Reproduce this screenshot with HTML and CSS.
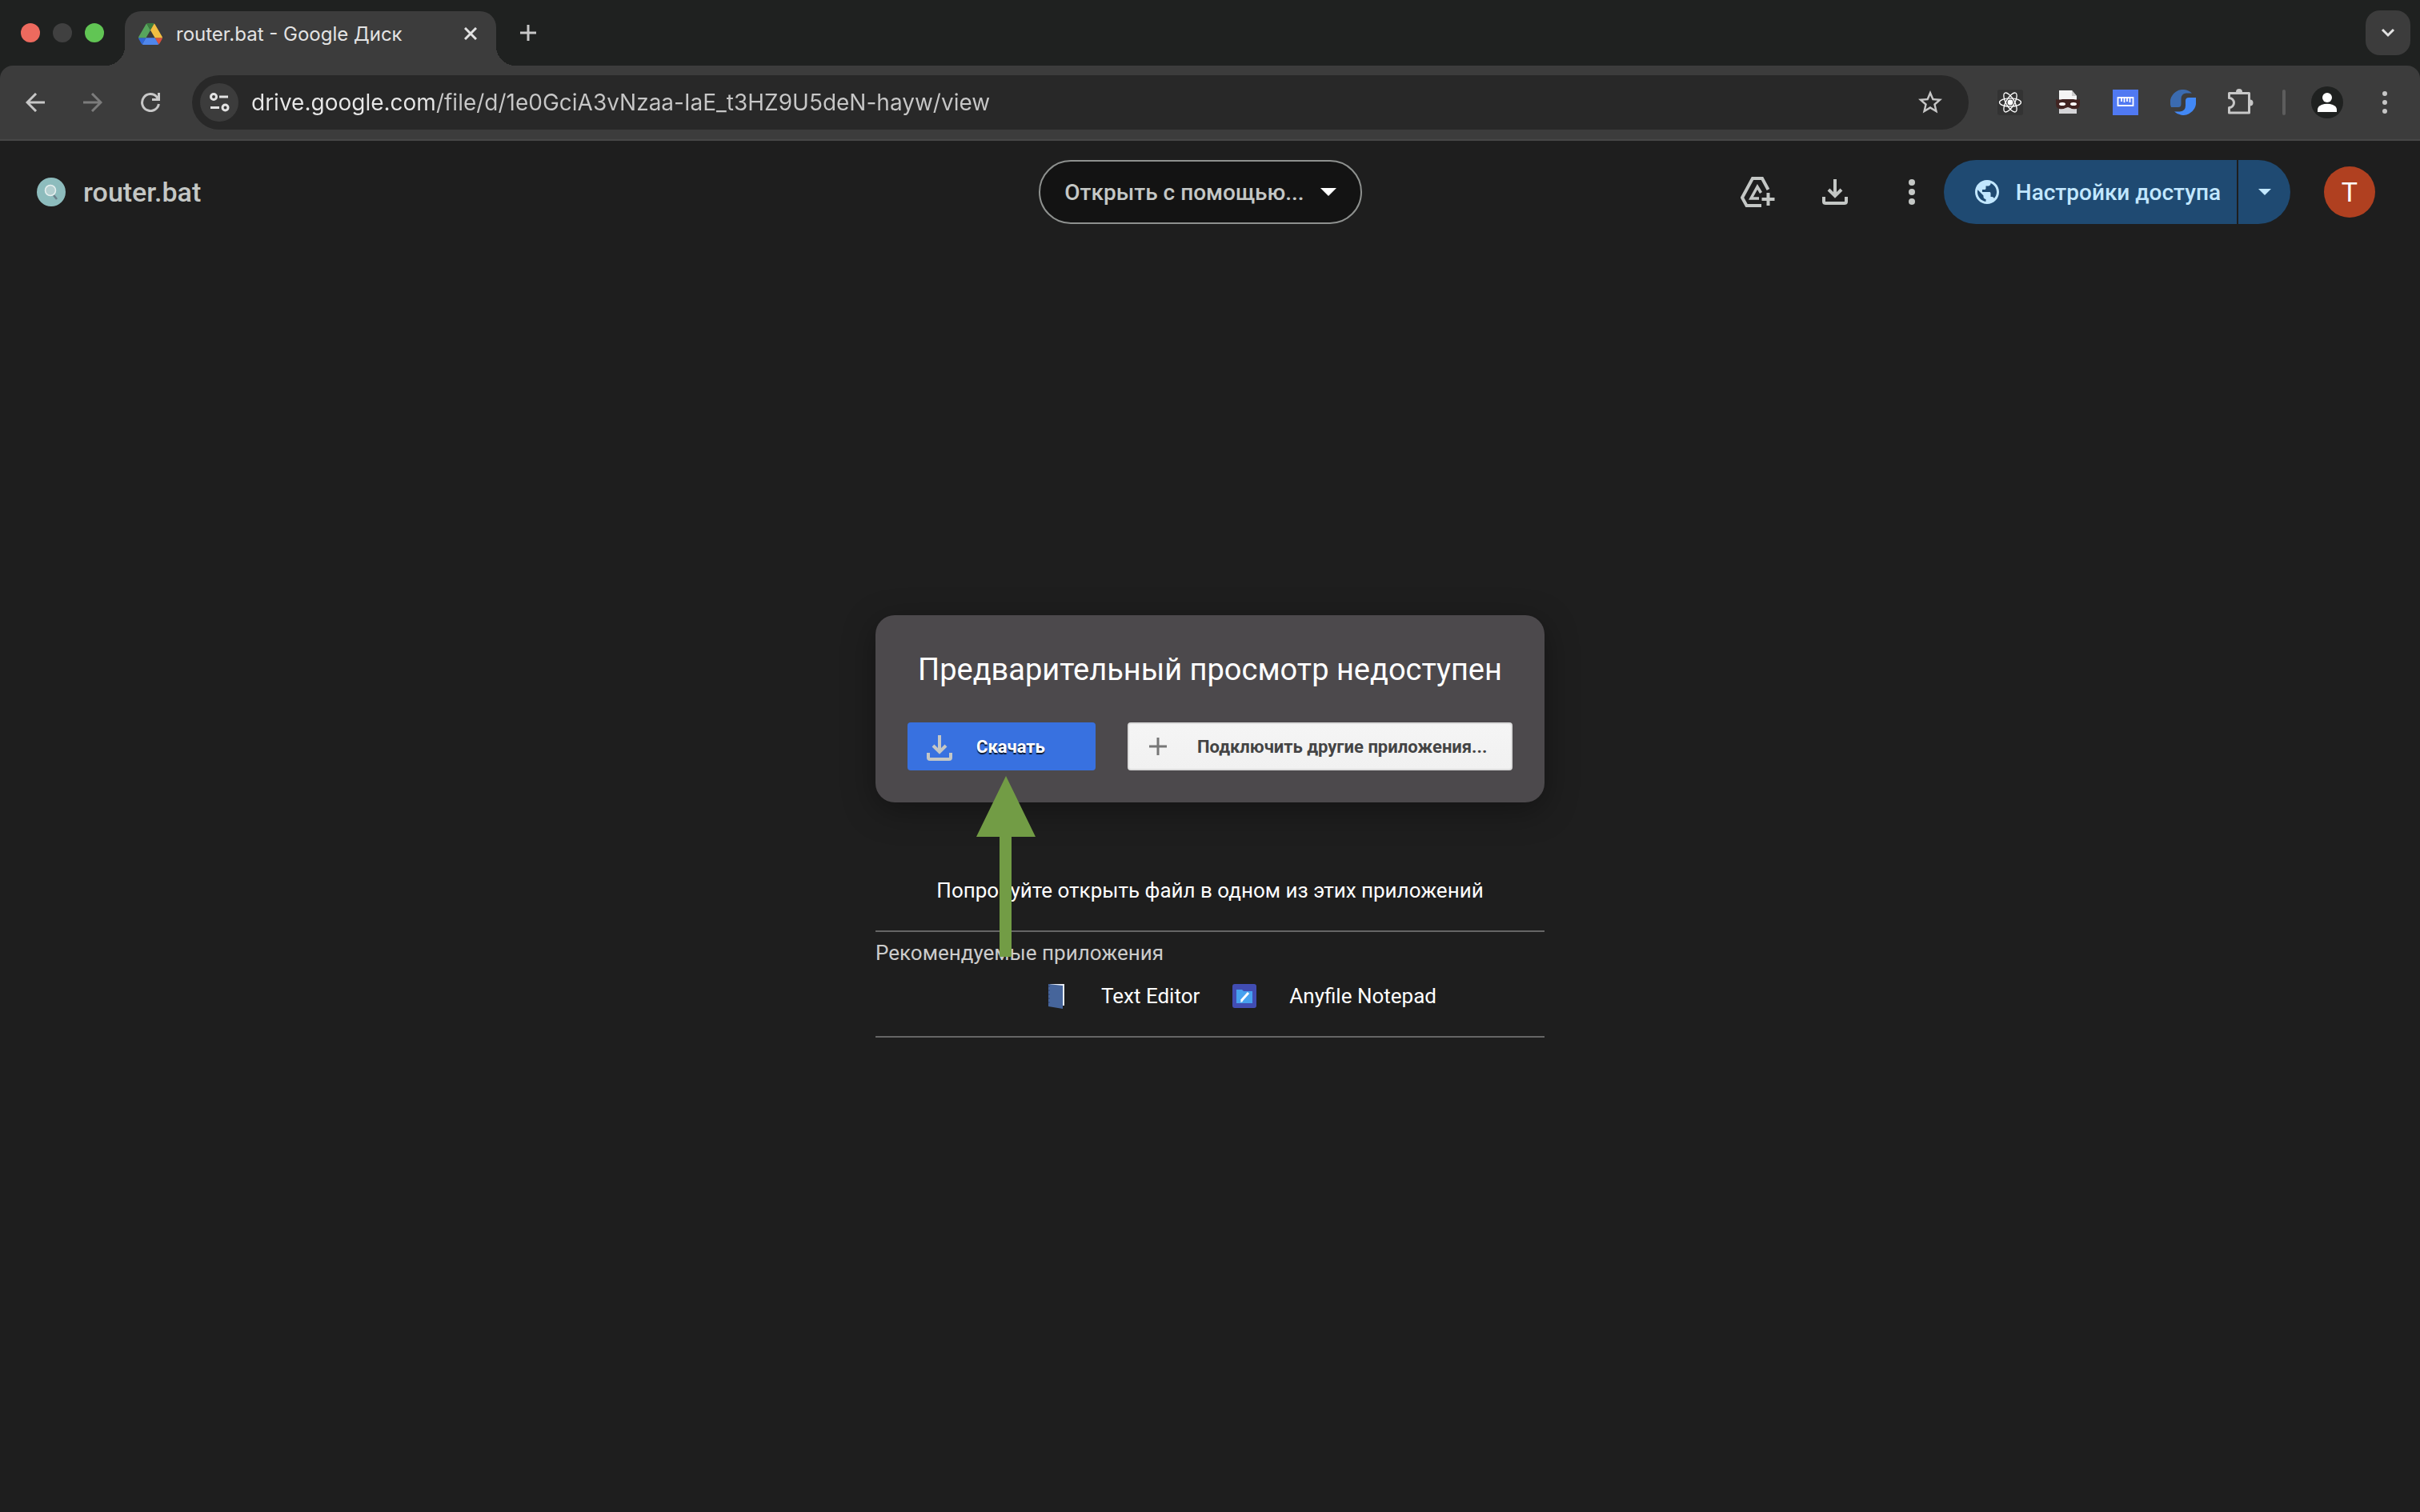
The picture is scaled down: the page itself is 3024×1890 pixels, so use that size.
FILE: index.html
```html
<!DOCTYPE html>
<html lang="ru">
<head>
    <meta charset="UTF-8">
    <title>router.bat - Google Диск</title>
    <link rel="stylesheet" href="styles.css">
</head>
<body>
<!-- browser window -->
<div class="browser">
    <div class="tabs">
        <div class="lights">
            <button class="light red" aria-label="Закрыть окно"></button>
            <button class="light" aria-label="Свернуть окно"></button>
            <button class="light green" aria-label="Развернуть окно"></button>
        </div>
        <div class="tab">
            <svg width="30" height="27" viewBox="0 0 87.3 78">
                <path fill="#3067d6" d="m6.6 66.85 3.85 6.65c.8 1.4 1.95 2.5 3.3 3.3l13.75-23.8h-27.5c0 1.55.4 3.1 1.2 4.5z"/>
                <path fill="#57a65c" d="m43.65 25-13.75-23.8c-1.35.8-2.5 1.9-3.3 3.3l-25.4 44a9.06 9.06 0 0 0-1.2 4.5h27.5z"/>
                <path fill="#d9503f" d="m73.55 76.8c1.35-.8 2.5-1.9 3.3-3.3l1.6-2.75 7.65-13.25c.8-1.4 1.2-2.95 1.2-4.5h-27.5l5.85 11.5z"/>
                <path fill="#3b7d3f" d="m43.65 25 13.75-23.8c-1.35-.8-2.9-1.2-4.5-1.2h-18.5c-1.6 0-3.15.45-4.5 1.2z"/>
                <path fill="#4f86ec" d="m59.8 53h-32.3l-13.75 23.8c1.35.8 2.9 1.2 4.5 1.2h50.8c1.6 0 3.15-.45 4.5-1.2z"/>
                <path fill="#f2be42" d="m73.4 26.5-12.7-22c-.8-1.4-1.95-2.5-3.3-3.3l-13.75 23.8 16.15 28h27.45c0-1.55-.4-3.1-1.2-4.5z"/>
            </svg>
            <span class="tab-title">router.bat - Google Диск</span>
            <button class="tab-close" aria-label="Закрыть вкладку">
                <svg width="16" height="16" viewBox="0 0 16 16" stroke="#e3e3e3" stroke-width="3"><path d="M1 1l14 14M15 1L1 15"/></svg>
            </button>
        </div>
        <button class="tab-new" aria-label="Новая вкладка">
            <svg width="20" height="20" viewBox="0 0 20 20" stroke="#c7c7c7" stroke-width="3"><path d="M10 0v20M0 10h20"/></svg>
        </button>
        <button class="tab-search" aria-label="Поиск вкладок">
            <svg width="18" height="12" viewBox="0 0 18 12" fill="none" stroke="#e3e3e3" stroke-width="3"><path d="M2 2l7 7 7-7"/></svg>
        </button>
    </div>

    <div class="toolbar">
        <button class="nav-btn" aria-label="Назад">
            <svg width="24" height="24" viewBox="0 0 24 24" fill="none" stroke="#c7c7c7" stroke-width="3"><path d="M24 12H3M13 1L2 12l11 11"/></svg>
        </button>
        <button class="nav-btn" aria-label="Вперёд">
            <svg width="24" height="24" viewBox="0 0 24 24" fill="none" stroke="#7c7c7c" stroke-width="3"><path d="M0 12h21M11 1l11 11-11 11"/></svg>
        </button>
        <button class="nav-btn" aria-label="Обновить">
            <svg width="24" height="24" viewBox="0 0 24 24" fill="none" stroke="#c7c7c7" stroke-width="3"><path d="M22.400 14A10.500 10.500 0 1 1 20 5.200l2 3.300M22.500 0v8.500H14"/></svg>
        </button>
        <div class="omnibox">
            <button class="site-info" aria-label="Сведения о сайте">
                <svg width="26" height="24" viewBox="0 0 26 24" fill="none" stroke="#e3e3e3" stroke-width="3"><circle cx="6" cy="5" r="3.500"/><path d="M13 5h11M2 18.500h11"/><circle cx="20.500" cy="18.500" r="3.500"/></svg>
            </button>
            <input class="url" type="text" aria-label="Адресная строка" value="drive.google.com/file/d/1e0GciA3vNzaa-IaE_t3HZ9U5deN-hayw/view">
            <button class="star" aria-label="Добавить в закладки">
                <svg width="36" height="36" viewBox="0 0 24 24" fill="#c7c7c7"><path d="M22 9.240l-7.190-.62L12 2 9.190 8.630 2 9.240l5.460 4.730L5.820 21 12 17.270 18.180 21l-1.630-7.030L22 9.240zM12 15.400l-3.760 2.270 1-4.280-3.320-2.880 4.380-.38L12 6.100l1.710 4.040 4.380.38-3.320 2.880 1 4.280L12 15.400z"/></svg>
            </button>
        </div>
        <div class="extensions">
            <button aria-label="React Developer Tools">
                <svg width="32" height="32" viewBox="0 0 32 32" fill="none" stroke="#fff" stroke-width="1.300">
                    <rect width="32" height="32" rx="3" fill="#333" stroke="none"/>
                    <circle cx="16" cy="16" r="2.800" fill="#fff"/>
                    <ellipse cx="16" cy="16" rx="13.500" ry="5.200"/>
                    <ellipse cx="16" cy="16" rx="13.500" ry="5.200" transform="rotate(60 16 16)"/>
                    <ellipse cx="16" cy="16" rx="13.500" ry="5.200" transform="rotate(120 16 16)"/>
                </svg>
            </button>
            <button aria-label="Маска">
                <svg width="32" height="32" viewBox="0 0 32 32">
                    <path fill="#f4f4f4" d="M5 1h16l6 7v22H5z"/>
                    <path fill="#ccc" d="M21 1l6 7h-6z"/>
                    <path fill="#d5d5d8" d="M5 22h22v8H5z"/>
                    <path fill="#412422" d="M1 12q4 1 8 0h14q5 1 8 0v5q0 6-4 7-6 1-8-1l-3-1-3 1q-3 2-8 1-4-1-4-7z"/>
                    <ellipse cx="9" cy="18" rx="4" ry="2" fill="#fff"/>
                    <ellipse cx="23" cy="18" rx="4" ry="2" fill="#fff"/>
                </svg>
            </button>
            <button aria-label="Линейка">
                <svg width="32" height="32" viewBox="0 0 32 32" fill="none" stroke="#fff" stroke-width="1.800"><rect width="32" height="32" fill="#5079f2" stroke="none"/><rect x="6.500" y="10" width="19" height="10"/><path d="M11 10v5M14.500 10v6M18 10v5M21.500 10v6"/></svg>
            </button>
            <button aria-label="Синхронизация">
                <svg width="32" height="32" viewBox="0 0 32 32"><path fill="#3b6bb0" d="M27 4.500A16 16 0 0 0 1 22h9q3.500 0 3.500-4v-6q0-7 6-7.500z"/><path fill="#4288f5" d="M32 10h-9q-4 0-4 4v6q0 7-7 7.500H5A16 16 0 0 0 32 14z"/></svg>
            </button>
            <button aria-label="Расширения">
                <svg width="34" height="34" viewBox="0 0 34 34" fill="none" stroke="#c7c7c7" stroke-width="3"><path stroke-linejoin="round" d="M2.500 5.500h25V30h-25v-6.500a6 6 0 0 0 0-12z"/><path fill="#c7c7c7" stroke="none" d="M11 4a4 4 0 0 1 8 0zM28.500 13.500a4 4 0 0 1 0 8z"/></svg>
            </button>
        </div>
        <span class="separator"></span>
        <button class="profile" aria-label="Профиль">
            <svg width="40" height="40" viewBox="0 0 40 40" fill="#fff"><circle cx="20" cy="20" r="20" fill="#1f2120"/><circle cx="20" cy="14" r="6"/><path d="M8 32v-3q0-4 5-6 7-2.500 14 0 5 2 5 6v3z"/></svg>
        </button>
        <button class="more" aria-label="Меню браузера">
            <svg width="6" height="28" viewBox="0 0 6 28" fill="#c7c7c7"><circle cx="3" cy="3" r="3"/><circle cx="3" cy="14" r="3"/><circle cx="3" cy="25" r="3"/></svg>
        </button>
    </div>
</div>

<!-- file viewer -->
<header class="header">
    <div class="file">
        <svg width="36" height="36" viewBox="0 0 36 36"><circle cx="18" cy="18" r="18" fill="#8dbcbd"/><path d="M21 22l4 5" stroke="#6b7f8a" stroke-width="2.500"/><circle cx="17" cy="16" r="6.500" fill="#b3cfd0" stroke="#e6efef" stroke-width="1.500"/></svg>
        <h1 class="file-name">router.bat</h1>
    </div>
    <button class="open-with" aria-haspopup="menu">
        Открыть с помощью...
        <svg width="20" height="10" viewBox="0 0 20 10" fill="#fff"><path d="M0 0h20L10 10z"/></svg>
    </button>
    <div class="actions">
        <div class="icons">
            <button class="icon-btn" aria-label="Добавить ярлык на Диск">
                <svg width="43" height="38" viewBox="0 0 43 38" fill="none" stroke="#c4c7c5" stroke-width="4"><path d="M34.500 16L27 2H15L2 26l5.500 10H26"/><path stroke-width="3.500" d="M25.500 20L21 12.500l-8 14.500h10"/><path d="M34.500 20v16M26.500 28h16"/></svg>
            </button>
            <button class="icon-btn" aria-label="Скачать файл">
                <svg width="32" height="32" viewBox="0 0 32 32" fill="none" stroke="#c4c7c5" stroke-width="4"><path d="M16 0v20M8 13l8 8 8-8M2 22v6q0 2 2 2h24q2 0 2-2v-6"/></svg>
            </button>
            <button class="icon-btn" aria-label="Другие действия">
                <svg width="8" height="32" viewBox="0 0 8 32" fill="#c4c7c5"><circle cx="4" cy="4" r="4"/><circle cx="4" cy="16" r="4"/><circle cx="4" cy="28" r="4"/></svg>
            </button>
        </div>
        <div class="share">
            <button class="share-main">
                <svg width="36" height="36" viewBox="0 0 24 24" fill="#c2e7ff"><path d="M12 2C6.480 2 2 6.480 2 12s4.480 10 10 10 10-4.480 10-10S17.520 2 12 2zm-1 17.930c-3.950-.49-7-3.850-7-7.930 0-.62.080-1.210.210-1.790L9 15v1c0 1.100.9 2 2 2v1.930zm6.900-2.540c-.26-.81-1-1.390-1.900-1.390h-1v-3c0-.55-.45-1-1-1H8v-2h2c.55 0 1-.45 1-1V7h2c1.100 0 2-.9 2-2v-.41c2.930 1.190 5 4.060 5 7.410 0 2.080-.8 3.970-2.100 5.390z"/></svg>
                Настройки доступа
            </button>
            <button class="share-more" aria-label="Быстрые действия">
                <svg width="16" height="8" viewBox="0 0 16 8" fill="#c2e7ff"><path d="M0 0h16L8 8z"/></svg>
            </button>
        </div>
        <button class="account" aria-label="Аккаунт">T</button>
    </div>
</header>

<main class="viewer">
    <div class="preview">
        <div class="card">
            <h2 class="card-title">Предварительный просмотр недоступен</h2>
            <div class="card-buttons">
                <button class="btn btn-blue">
                    <svg width="32" height="36" viewBox="0 -4 32 36" fill="none" stroke="#c4c7c5" stroke-width="4"><path d="M16 0v20M8 13l8 8 8-8M2 22v6q0 2 2 2h24q2 0 2-2v-6"/></svg>
                    Скачать
                </button>
                <button class="btn btn-light">
                    <svg width="22" height="22" viewBox="0 0 22 22" stroke="#777" stroke-width="3"><path d="M11 0v22M0 11h22"/></svg>
                    Подключить другие приложения...
                </button>
            </div>
        </div>
        <p class="hint">Попробуйте открыть файл в одном из этих приложений</p>
        <section class="apps">
            <h3 class="apps-title">Рекомендуемые приложения</h3>
            <div class="apps-list">
                <a class="app" href="#">
                    <svg width="32" height="32" viewBox="0 0 32 32"><path fill="#e8edf5" d="M8 1h18v27h-8z"/><path fill="#46659b" d="M6 1l18 2v29L6 29z"/><path stroke="#2c4370" stroke-dasharray="2 3" d="M7 3v25"/></svg>
                    Text Editor
                </a>
                <a class="app" href="#">
                    <svg width="32" height="32" viewBox="0 0 32 32"><rect x="1" y="1" width="30" height="30" rx="3" fill="#414db3"/><path fill="#47a1ef" d="M6 8h7l2 2h11v15H6z"/><path d="M12 22l9-10" stroke="#fff" stroke-width="3"/><path d="M11 24l1-3 2 2z" fill="#fff"/></svg>
                    Anyfile Notepad
                </a>
            </div>
        </section>
        <svg class="pointer" width="76" height="226" viewBox="0 0 76 226" fill="#729c45"><path d="M38 0l37 76H45v150H30V76H1z"/></svg>
    </div>
</main>
</body>
</html>
```
FILE: styles.css
```css
* {
    margin: 0;
    padding: 0;
    box-sizing: border-box;
}
body {
    display: flex;
    flex-direction: column;
    min-height: 100vh;
    font-family: Roboto, "Liberation Sans", sans-serif;
    font-size: 26px;
    color: #fff;
    background: #1e1e1e;
}
button {
    display: flex;
    align-items: center;
    justify-content: center;
    border: none;
    background: none;
    font-family: inherit;
    color: inherit;
    cursor: pointer;
}
svg {
    flex: none;
}

/* browser */
.browser {
    font-family: Inter, "Liberation Sans", sans-serif;
    background: #1f2120;
}
.tabs {
    display: flex;
    align-items: center;
    height: 82px;
    padding: 0 12px 0 26px;
}
.lights {
    display: flex;
    gap: 16px;
    width: 130px;
}
.light {
    width: 24px;
    height: 24px;
    border-radius: 50%;
    background: #404040;
}
.light.red {
    background: #ed6a5e;
}
.light.green {
    background: #61c554;
}
.tab {
    position: relative;
    display: flex;
    align-self: flex-end;
    align-items: center;
    width: 464px;
    height: 68px;
    padding: 0 24px 12px 17px;
    border-radius: 20px 20px 0 0;
    background: #3c3c3c;
}
.tab::before,
.tab::after {
    content: "";
    position: absolute;
    bottom: 0;
    width: 24px;
    height: 24px;
}
.tab::before {
    left: -24px;
    background: radial-gradient(circle at 0 0, transparent 24px, #3c3c3c 24px);
}
.tab::after {
    right: -24px;
    background: radial-gradient(circle at 100% 0, transparent 24px, #3c3c3c 24px);
}
.tab-title {
    flex: 1;
    margin-left: 17px;
    font-size: 24px;
    color: #e3e3e3;
}
.tab-new {
    width: 56px;
    height: 56px;
    margin-left: 12px;
}
.tab-search {
    width: 56px;
    height: 56px;
    margin-left: auto;
    border-radius: 18px;
    background: #3c3c3c;
}
.toolbar {
    display: flex;
    align-items: center;
    height: 94px;
    padding: 0 16px 0 8px;
    border-bottom: 2px solid #474747;
    border-radius: 16px 16px 0 0;
    background: #3c3c3c;
}
.nav-btn {
    width: 72px;
    height: 72px;
}
.omnibox {
    display: flex;
    flex: 1;
    align-items: center;
    height: 68px;
    margin-left: 16px;
    padding: 0 24px 0 10px;
    border-radius: 34px;
    background: #282828;
}
.site-info {
    width: 48px;
    height: 48px;
    border-radius: 50%;
    background: #3c3c3c;
}
.url {
    flex: 1;
    margin: 0 16px;
    border: none;
    outline: none;
    font-family: inherit;
    font-size: 28px;
    color: #c7c7c7;
    /* the host is lighter than the path */
    background: linear-gradient(to right, #e8e8e8 230px, #c7c7c7 230px);
    -webkit-background-clip: text;
    background-clip: text;
    -webkit-text-fill-color: transparent;
}
.star {
    width: 48px;
    height: 48px;
}
.extensions {
    display: flex;
    padding: 0 16px;
}
.extensions button {
    width: 72px;
    height: 56px;
}
.separator {
    width: 4px;
    height: 32px;
    border-radius: 2px;
    background: #5d5d5d;
}
.profile {
    width: 72px;
    margin-left: 16px;
}
.more {
    width: 56px;
    height: 56px;
    margin-left: 8px;
}

/* viewer header */
.header {
    display: grid;
    grid-template-columns: 1fr auto 1fr;
    align-items: center;
    height: 128px;
    padding: 0 56px 0 32px;
}
.file {
    display: flex;
    align-items: center;
    gap: 22px;
    padding-left: 14px;
    color: #c4c7c5;
}
.file-name {
    font-size: 34px;
    font-weight: 500;
}
.open-with {
    gap: 20px;
    height: 80px;
    padding: 0 30px;
    border: 2px solid #8e918f;
    border-radius: 40px;
    font-size: 28px;
    font-weight: 500;
    color: #c4c7c5;
    background: #131313;
}
.actions {
    display: flex;
    align-items: center;
    justify-content: flex-end;
}
.icons {
    display: flex;
    gap: 16px;
}
.icon-btn {
    width: 80px;
    height: 80px;
}
.share {
    display: flex;
    gap: 2px;
}
.share-main,
.share-more {
    height: 80px;
    font-size: 28px;
    font-weight: 500;
    color: #c2e7ff;
    background: #1f4a72;
}
.share-main {
    gap: 18px;
    padding: 0 20px 0 36px;
    border-radius: 40px 0 0 40px;
}
.share-more {
    width: 65px;
    border-radius: 0 40px 40px 0;
}
.account {
    width: 64px;
    height: 64px;
    margin-left: 42px;
    border-radius: 50%;
    font-size: 34px;
    background: #b04020;
}

/* file preview */
.viewer {
    display: flex;
    flex: 1;
    align-items: center;
    justify-content: center;
    padding-bottom: 128px;
}
.preview {
    position: relative;
    width: 836px;
}
.card {
    padding: 40px;
    border-radius: 24px;
    background: #4c494c;
    box-shadow: 0 10px 40px rgba(0, 0, 0, .35);
}
.card-title {
    margin-bottom: 38px;
    font-size: 38px;
    font-weight: 400;
    line-height: 56px;
    text-align: center;
}
.card-buttons {
    display: flex;
    gap: 40px;
}
.btn {
    height: 60px;
    border-radius: 4px;
    font-size: 22px;
    font-weight: 700;
}
.btn-blue {
    justify-content: flex-start;
    gap: 30px;
    width: 235px;
    padding: 0 24px;
    background: #3871e0;
    text-shadow: 0 2px 1px rgba(0, 0, 0, .8);
}
.btn-light {
    flex: 1;
    justify-content: flex-start;
    gap: 38px;
    padding: 0 17px 0 25px;
    border: 2px solid #dcdcdc;
    color: #444;
    background: linear-gradient(#f5f5f5, #f1f1f1);
}
.hint {
    margin: 94px 0 34px;
    line-height: 32px;
    text-align: center;
}
.apps {
    padding: 10px 0 34px;
    border-top: 2px solid #666;
    border-bottom: 2px solid #666;
}
.apps-title {
    margin-bottom: 22px;
    font-size: 26px;
    font-weight: 400;
    line-height: 32px;
    color: #ccc;
}
.apps-list {
    display: flex;
    gap: 40px;
    padding-left: 210px;
}
.app {
    display: flex;
    align-items: center;
    gap: 40px;
    line-height: 32px;
    color: #fff;
    text-decoration: none;
}
.pointer {
    position: absolute;
    top: 201px;
    left: 125px;
}
```
